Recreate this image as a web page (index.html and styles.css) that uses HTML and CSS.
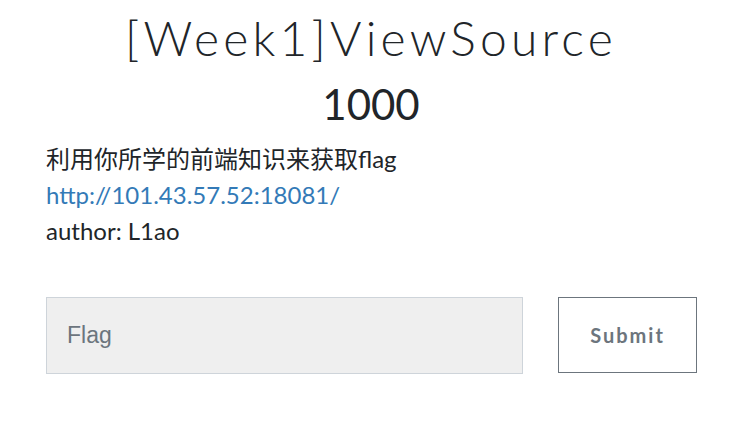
FILE: index.html
```html
<!DOCTYPE html>
<html>
<head>
<meta charset="utf-8">
<link rel="stylesheet" href="styles.css">
</head>
<body>
<div class="modal">
  <h2 class="title">[Week1]ViewSource</h2>
  <h3 class="value">1000</h3>
  <div class="desc">
    <p>利用你所学的前端知识来获取flag</p>
    <p><a href="#">http://101.43.57.52:18081/</a></p>
    <p>author: L1ao</p>
  </div>
  <form class="submit-row">
    <input class="flag-input" type="text" placeholder="Flag">
    <button class="submit-btn" type="button">Submit</button>
  </form>
</div>
</body>
</html>
```
FILE: styles.css
```css
html, body {
  margin: 0;
  padding: 0;
  background: #fff;
}
body {
  font-family: Lato, "Noto Sans CJK SC", sans-serif;
  color: #212529;
}
.modal {
  padding: 0 43px 0 46px;
}
.title {
  margin: 0;
  padding-top: 9px;
  text-align: center;
  font-weight: 300;
  font-size: 48px;
  line-height: 58px;
  letter-spacing: 4.2px;
}
.value {
  margin: 12px 0 0;
  text-align: center;
  font-weight: 400;
  font-size: 42px;
  line-height: 50px;
}
.desc {
  margin-top: 12px;
  font-size: 24px;
  line-height: 36px;
}
.desc p {
  margin: 0;
}
.desc a {
  color: #337ab7;
  text-decoration: none;
}
.submit-row {
  display: flex;
  gap: 35px;
  margin-top: 48px;
}
.flag-input {
  flex: 0 0 477px;
  box-sizing: border-box;
  height: 77px;
  border: 1px solid #ced4da;
  background: #efefef;
  padding: 0 20px;
  font-family: "Liberation Sans", Arial, sans-serif;
  font-size: 23px;
  color: #495057;
  outline: none;
}
.flag-input::placeholder {
  color: #6c757d;
}
.submit-btn {
  flex: 0 0 139px;
  box-sizing: border-box;
  height: 76px;
  border: 1px solid #6c757d;
  background: #fff;
  color: #6c757d;
  font-family: Lato, sans-serif;
  font-weight: 700;
  font-size: 20px;
  letter-spacing: 2px;
  cursor: pointer;
}
```
